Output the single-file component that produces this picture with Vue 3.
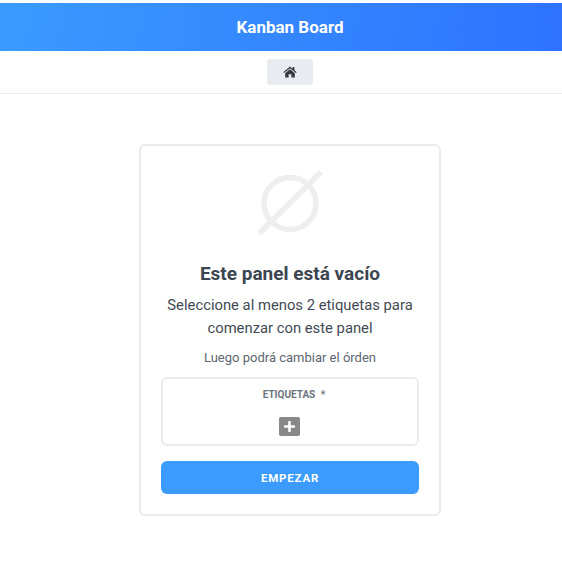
<template>
  <div class="page">
    <header class="topbar">
      <h1 class="brand">Kanban Board</h1>
    </header>
    <nav class="navrow">
      <button class="home-btn" type="button" aria-label="Inicio">
        <svg width="14" height="12" viewBox="0 0 14 12">
          <path d="M7 0.6 L0.3 6.2 L1.1 7.1 L7 2.2 L12.9 7.1 L13.7 6.2 L11.4 4.3 V1 H9.6 V2.8 Z" fill="#343a40"/>
          <path d="M7 3.2 L2.2 7.2 V11.6 H5.6 V8.2 H8.4 V11.6 H11.8 V7.2 Z" fill="#343a40"/>
        </svg>
      </button>
    </nav>
    <main class="content">
      <section class="card">
        <svg class="empty-icon" width="68" height="68" viewBox="0 0 68 68" fill="none" stroke="#eeeeee">
          <circle cx="34" cy="34.500" r="26" stroke-width="5.500"/>
          <path d="M3 64.500 L65 3" stroke-width="5.500"/>
        </svg>
        <h2 class="title">Este panel está vacío</h2>
        <p class="lead">Seleccione al menos 2 etiquetas para comenzar con este panel</p>
        <p class="hint">Luego podrá cambiar el órden</p>
        <div class="tags">
          <div class="tags-label">ETIQUETAS <span class="req">*</span></div>
          <button class="add-btn" type="button" aria-label="Agregar">
            <svg width="11" height="11" viewBox="0 0 11 11">
              <path d="M5.500 1 V10 M1 5.500 H10" stroke="#fff" stroke-width="2.600" stroke-linecap="round"/>
            </svg>
          </button>
        </div>
        <button class="start-btn" type="button">EMPEZAR</button>
      </section>
    </main>
  </div>
</template>

<script setup>
</script>

<style>
html, body {
  background: #fff;
  overflow: hidden;
}
</style>

<style scoped>
.page {
  width: 580px;
  padding-top: 3px;
  font-family: Roboto, "Noto Sans", sans-serif;
  color: #3c4650;
}

.topbar {
  height: 48px;
  display: flex;
  align-items: center;
  justify-content: center;
  background: linear-gradient(100deg, #3a9bff 0%, #2e71ff 100%);
}

.brand {
  margin: 0;
  font-size: 17px;
  font-weight: 700;
  color: #fff;
}

.navrow {
  height: 43px;
  display: flex;
  justify-content: center;
  align-items: flex-start;
  padding-top: 8px;
  box-sizing: border-box;
  border-bottom: 1px solid #e9ebee;
}

.home-btn {
  width: 46px;
  height: 26px;
  padding: 0;
  border: 0;
  border-radius: 3px;
  background: #e8ebef;
  display: flex;
  align-items: center;
  justify-content: center;
}

.content {
  display: flex;
  justify-content: center;
  padding-top: 50px;
}

.card {
  width: 302px;
  height: 372px;
  box-sizing: border-box;
  padding: 23px 20px 0;
  border: 2px solid #e8ebf0;
  border-radius: 6px;
  display: flex;
  flex-direction: column;
  align-items: center;
  text-align: center;
}

.empty-icon {
  display: block;
  flex-shrink: 0;
}

.title {
  margin: 25px 0 0;
  font-size: 19px;
  line-height: 24px;
  font-weight: 700;
  color: #3c4650;
}

.lead {
  margin: 8px 0 0;
  font-size: 14.800px;
  line-height: 23px;
  color: #3f4a55;
}

.hint {
  margin: 9px 0 0;
  font-size: 13px;
  line-height: 18px;
  color: #5c6670;
}

.tags {
  width: 258px;
  height: 69px;
  margin-top: 10px;
  box-sizing: border-box;
  flex-shrink: 0;
  padding-top: 10px;
  border: 2px solid #e8ebf0;
  border-radius: 6px;
  display: flex;
  flex-direction: column;
  align-items: center;
}

.tags-label {
  margin-left: 8px;
  font-size: 10px;
  line-height: 12px;
  font-weight: 700;
  color: #6c757d;
}

.req {
  margin-left: 3px;
}

.add-btn {
  width: 21px;
  height: 19px;
  margin-top: 16px;
  margin-right: 1px;
  padding: 0;
  border: 0;
  border-radius: 2px;
  background: #888888;
  display: flex;
  align-items: center;
  justify-content: center;
}

.start-btn {
  width: 258px;
  height: 33px;
  margin-top: 15px;
  flex-shrink: 0;
  border: 0;
  border-radius: 6px;
  background: #3b9bff;
  color: #fff;
  font-family: inherit;
  font-size: 11.500px;
  font-weight: 700;
  letter-spacing: 0.8px;
}
</style>
